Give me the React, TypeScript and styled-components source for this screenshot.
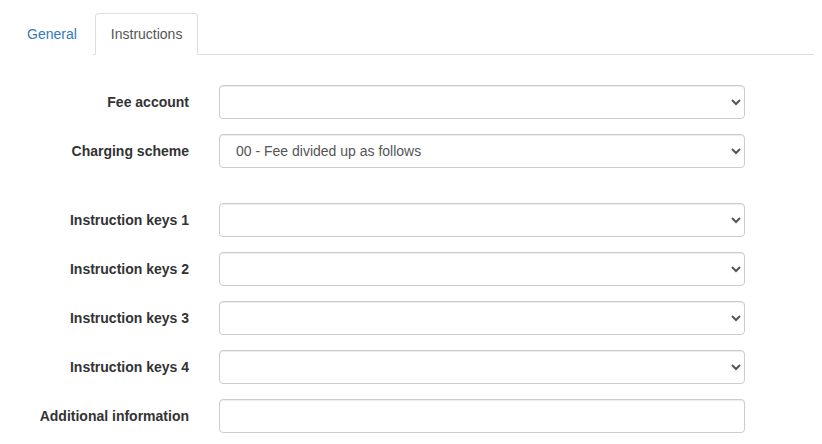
import { FC, Fragment } from 'react'
import styled, { createGlobalStyle } from 'styled-components'

const GlobalStyle = createGlobalStyle`
  body {
    margin: 0;
    background: #fff;
    font-family: 'Liberation Sans', Arial, sans-serif;
    font-size: 14px;
    line-height: 1.42857;
    color: #333;
  }
`

const Page = styled.div`
  padding: 13px 8px 0 11px;
`

const Tabs = styled.ul`
  display: flex;
  margin: 0;
  padding: 0;
  list-style: none;
  border-bottom: 1px solid #ddd;
`

const Tab = styled.li<{ $active?: boolean }>`
  margin-right: 2px;
  margin-bottom: -1px;
  padding: 10px 15px;
  line-height: 20px;
  border: 1px solid ${(p) => (p.$active ? '#ddd' : 'transparent')};
  border-bottom-color: ${(p) => (p.$active ? '#fff' : 'transparent')};
  border-radius: 4px 4px 0 0;
  background: #fff;
  color: ${(p) => (p.$active ? '#555' : '#337ab7')};
  cursor: pointer;
`

const Form = styled.form`
  display: grid;
  grid-template-columns: 193px 526px;
  row-gap: 15px;
  padding-top: 30px;
  align-items: center;
`

const Label = styled.label`
  padding: 2px 15px 0 0;
  text-align: right;
  font-weight: bold;
`

const fieldCss = `
  box-sizing: border-box;
  display: block;
  width: 100%;
  height: 34px;
  margin-left: 15px;
  padding: 6px 12px;
  font-family: 'Liberation Sans', Arial, sans-serif;
  font-size: 14px;
  line-height: 1.42857;
  color: #555;
  background: #fff;
  border: 1px solid #ccc;
  border-radius: 4px;
  box-shadow: inset 0 1px 1px rgba(0, 0, 0, 0.075);
`

const Select = styled.select`
  ${fieldCss}
`

const Input = styled.input`
  ${fieldCss}
`

const Spacer = styled.div`
  grid-column: 1 / -1;
  height: 5px;
`

const selectRows = ['Instruction keys 1', 'Instruction keys 2', 'Instruction keys 3', 'Instruction keys 4']

const App: FC = () => (
  <Page>
    <GlobalStyle />
    <Tabs>
      <Tab>General</Tab>
      <Tab $active>Instructions</Tab>
    </Tabs>
    <Form>
      <Label>Fee account</Label>
      <Select defaultValue="">
        <option value=""></option>
      </Select>
      <Label>Charging scheme</Label>
      <Select defaultValue="00">
        <option value="00">00 - Fee divided up as follows</option>
      </Select>
      <Spacer />
      {selectRows.map((label) => (
        <Fragment key={label}>
          <Label>{label}</Label>
          <Select defaultValue="">
            <option value=""></option>
          </Select>
        </Fragment>
      ))}
      <Label>Additional information</Label>
      <Input type="text" />
    </Form>
  </Page>
)

export default App
